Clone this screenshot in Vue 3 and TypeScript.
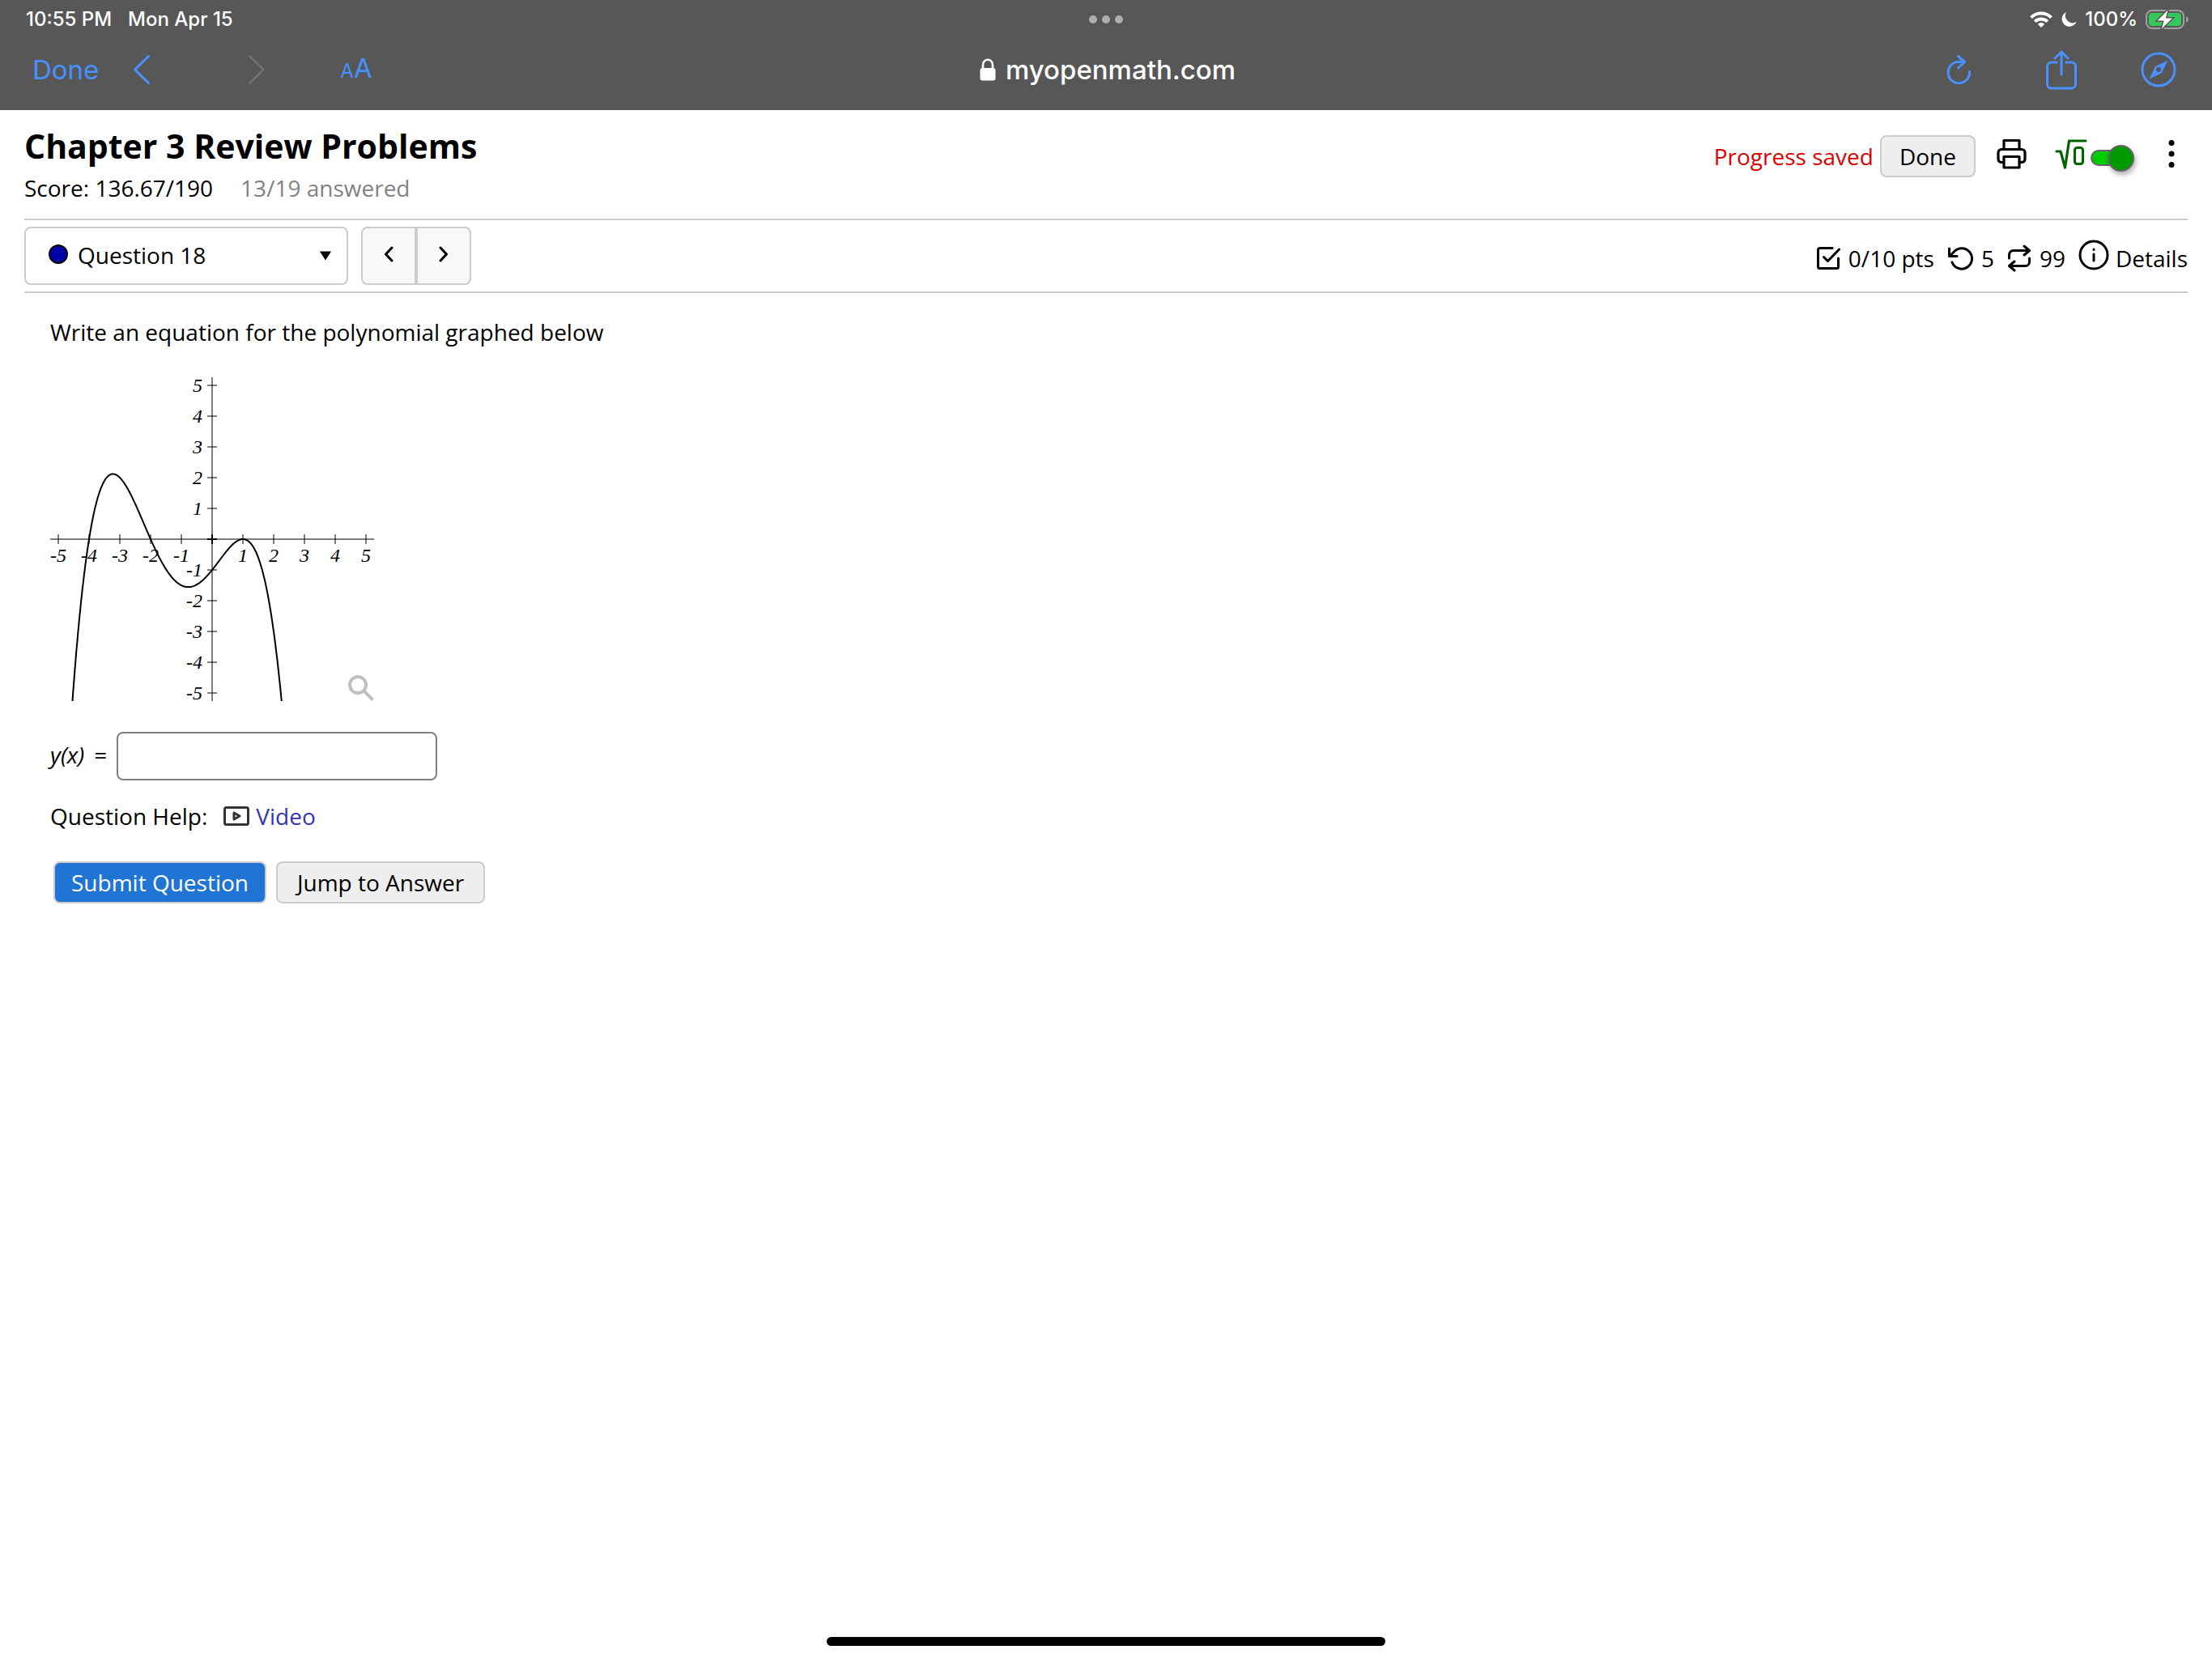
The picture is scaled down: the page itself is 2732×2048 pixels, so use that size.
<script setup lang="ts">
import { ref } from 'vue'

const UNIT = 38
const CENTER = 200
const ticks: number[] = [-5, -4, -3, -2, -1, 1, 2, 3, 4, 5]

const px = (x: number): number => CENTER + x * UNIT
const py = (y: number): number => CENTER - y * UNIT

// Quartic with roots at -4 and -2 and a double root at 1
const f = (x: number): number => (-1 / 8) * (x + 4) * (x + 2) * (x - 1) ** 2

// Points run a little past the window; the clip path trims both ends
const points: string[] = []
for (let x = -5.2; x <= 5.2; x += 0.02) {
  const y = f(x)
  if (y >= -5.8) points.push(`${px(x).toFixed(1)},${py(y).toFixed(1)}`)
}
const curve = points.join(' ')

const answer = ref('')
const question = ref('18')
const mathDisplay = ref(true)
</script>

<template>
  <div class="screen">
    <header class="chrome">
      <div class="status">
        <div class="status-left">
          <span>10:55 PM</span>
          <span>Mon Apr 15</span>
        </div>
        <svg class="dots" width="42" height="10" viewBox="0 0 42 10" aria-hidden="true">
          <circle cx="5" cy="5" r="5" />
          <circle cx="21" cy="5" r="5" />
          <circle cx="37" cy="5" r="5" />
        </svg>
        <div class="status-right">
          <svg width="28" height="20" viewBox="0 0 28 20" aria-hidden="true">
            <g fill="none" stroke="#fff" stroke-width="4">
              <path d="M1.500 7.600a18 18 0 0 1 25 0" />
              <path d="M6.200 12.600a11.200 11.200 0 0 1 15.600 0" />
            </g>
            <path fill="#fff" d="M14 20l-4.200-4.300a6 6 0 0 1 8.400 0z" />
          </svg>
          <svg class="moon" width="20" height="20" viewBox="0 0 20 20" aria-hidden="true">
            <path fill="#fff" d="M7 1A9.300 9.300 0 1 0 19.500 13 9 9 0 0 1 7 1z" />
          </svg>
          <span class="percent">100%</span>
          <svg width="54" height="26" viewBox="0 0 54 26" aria-hidden="true">
            <rect x="1" y="2" width="46" height="22" rx="7" fill="none" stroke="#a0a0a0" stroke-width="2" />
            <path fill="#a0a0a0" d="M50 9q3 1.500 3 4t-3 4z" />
            <rect x="4" y="5" width="40" height="16" rx="4" fill="#34c759" />
            <path fill="#fff" stroke="#575757" stroke-width="3" paint-order="stroke" d="M27.500 1.500L14.500 14.500h8.200L19.800 24.500 33 11.500h-8.200z" />
          </svg>
        </div>
      </div>
      <div class="toolbar">
        <div class="tools-left">
          <button type="button" class="tool">Done</button>
          <button type="button" class="tool back" aria-label="Back">
            <svg width="22" height="38" viewBox="0 0 22 38"><path d="M19.500 2.500L2.500 19l17 16.500" /></svg>
          </button>
          <button type="button" class="tool forward" aria-label="Forward" disabled>
            <svg width="22" height="38" viewBox="0 0 22 38"><path d="M2.500 2.500L19.500 19l-17 16.500" /></svg>
          </button>
          <button type="button" class="tool sizes" aria-label="Text size"><small>A</small>A</button>
        </div>
        <div class="address">
          <svg width="20" height="28" viewBox="0 0 20 28" aria-hidden="true">
            <rect x="0.500" y="12" width="19" height="15.500" rx="3" fill="#fff" />
            <path d="M4 13V8a6 6.200 0 0 1 12 0v5" fill="none" stroke="#fff" stroke-width="2.600" />
          </svg>
          <span>myopenmath.com</span>
        </div>
        <div class="tools-right">
          <button type="button" class="tool" aria-label="Reload">
            <svg width="44" height="40" viewBox="0 0 44 40">
              <path d="M22.500 10.500L15.300 10.200A13.300 13.300 0 1 0 28.600 22.500" />
              <path d="M14.500 3.500l8 7-8 7.500" />
            </svg>
          </button>
          <button type="button" class="tool" aria-label="Share">
            <svg width="40" height="50" viewBox="0 0 40 50">
              <path d="M14 16H7.500a5 5 0 0 0-5 5v22a5 5 0 0 0 5 5h25a5 5 0 0 0 5-5V21a5 5 0 0 0-5-5H26" />
              <path d="M20 31V3M12 11l8-8 8 8" />
            </svg>
          </button>
          <button type="button" class="tool" aria-label="Open in browser">
            <svg width="44" height="44" viewBox="0 0 44 44">
              <circle cx="22" cy="22" r="20" />
              <path fill="#4891ff" fill-rule="evenodd" stroke="none" d="M33.500 10.500L18 18 10.500 33.500 26 26zM22 19a3 3 0 1 1 0 6 3 3 0 0 1 0-6z" />
            </svg>
          </button>
        </div>
      </div>
    </header>

    <main class="page">
      <div class="heading">
        <div>
          <h1>Chapter 3 Review Problems</h1>
          <p class="score"><span>Score: 136.67/190</span><span class="answered">13/19 answered</span></p>
        </div>
        <div class="actions">
          <span class="saved">Progress saved</span>
          <button type="button" class="btn done">Done</button>
          <button type="button" class="icon-btn print" aria-label="Print">
            <svg width="38" height="38" viewBox="0 0 38 38" fill="none" stroke="#000" stroke-width="3.200" stroke-linejoin="round">
              <path d="M9 13.500V2.500h19v11" />
              <path d="M9 29.500H6a4 4 0 0 1-4-4v-8a4 4 0 0 1 4-4h25a4 4 0 0 1 4 4v8a4 4 0 0 1-4 4h-3" />
              <path d="M9 22.500h19v13.500H9z" />
            </svg>
          </button>
          <label class="switch">
            <svg width="40" height="38" viewBox="0 0 40 38" fill="none" stroke="#006400" stroke-width="3.200" stroke-linecap="round" stroke-linejoin="round" aria-hidden="true">
              <path d="M2 16h5l5.500 20L17.500 3H38" />
              <rect x="24.500" y="11.500" width="10" height="20" rx="3" />
            </svg>
            <input v-model="mathDisplay" type="checkbox" aria-label="Math display" />
            <span class="track"><span class="knob"></span></span>
          </label>
          <button type="button" class="icon-btn" aria-label="More options">
            <svg width="8" height="36" viewBox="0 0 8 36"><circle cx="4" cy="4.500" r="3.500" /><circle cx="4" cy="18" r="3.500" /><circle cx="4" cy="31.500" r="3.500" /></svg>
          </button>
        </div>
      </div>

      <div class="nav">
        <div class="picker">
          <select v-model="question" aria-label="Question">
            <option value="18">Question 18</option>
          </select>
          <span class="marker"></span>
          <svg class="caret" width="16" height="12" viewBox="0 0 16 12" aria-hidden="true"><path d="M1 0.500h14L8 11.500z" /></svg>
        </div>
        <div class="pager">
          <button type="button" aria-label="Previous question">
            <svg width="14" height="20" viewBox="0 0 14 20"><path d="M11 2L3.500 10l7.500 8" /></svg>
          </button>
          <button type="button" aria-label="Next question">
            <svg width="14" height="20" viewBox="0 0 14 20"><path d="M3 2l7.500 8L3 18" /></svg>
          </button>
        </div>
        <div class="meta">
          <span class="item">
            <svg width="30" height="30" viewBox="0 0 30 30"><path d="M20 2.500H4.500a2 2 0 0 0-2 2v21a2 2 0 0 0 2 2h21a2 2 0 0 0 2-2V15" /><path d="M9.500 13.500l5 5L28.500 4" /></svg>
            0/10 pts
          </span>
          <span class="item">
            <svg width="32" height="30" viewBox="0 0 32 30"><path d="M2.500 3v9.500h9.500" /><path d="M3.500 12l4.800-5A12.700 12.700 0 1 1 6 20" /></svg>
            5
          </span>
          <span class="item">
            <svg width="30" height="34" viewBox="0 0 30 34"><path d="M2.500 17v-4.500a5 5 0 0 1 5-5H27M21 2l6.500 5.500L21 13" /><path d="M27.500 17v4.500a5 5 0 0 1-5 5H3M9 21l-6.500 5.500L9 32" /></svg>
            99
          </span>
          <button type="button" class="details">
            <svg width="38" height="38" viewBox="0 0 38 38"><circle cx="19" cy="19" r="17" /><path d="M19 18v8M19 12v0.500" /></svg>
            Details
          </button>
        </div>
      </div>

      <section class="question">
        <p class="prompt">Write an equation for the polynomial graphed below</p>
        <div class="graph">
          <svg class="plot" width="400" height="400" viewBox="0 0 400 400" role="img" aria-label="Graph of a quartic polynomial">
            <clipPath id="plot-area"><rect width="400" height="400" /></clipPath>
            <g class="axes">
              <path d="M0 200h400" />
              <path d="M200 0v400" />
              <path class="origin" d="M194 200h12M200 194v12" />
              <template v-for="t in ticks" :key="t">
                <path :d="`M${px(t)} 194v12`" />
                <path :d="`M194 ${py(t)}h12`" />
              </template>
            </g>
            <g class="labels">
              <template v-for="t in ticks" :key="t">
                <text :x="px(t)" y="228" text-anchor="middle">{{ t }}</text>
                <text x="188" :y="py(t) + 8" text-anchor="end">{{ t }}</text>
              </template>
            </g>
            <polyline :points="curve" class="curve" clip-path="url(#plot-area)" />
          </svg>
          <button type="button" class="zoom" aria-label="Enlarge graph">
            <svg width="34" height="34" viewBox="0 0 34 34"><circle cx="14" cy="14" r="10" /><path d="M21 21l11.500 11.500" /></svg>
          </button>
        </div>
        <div class="answer">
          <label for="answer"><i>y(x)</i><span>=</span></label>
          <input id="answer" v-model="answer" type="text" autocomplete="off" />
        </div>
        <p class="help">
          <span>Question Help:</span>
          <a href="#video">
            <svg width="32" height="24" viewBox="0 0 32 24" aria-hidden="true"><rect x="1.500" y="1.500" width="29" height="21" rx="2" /><path d="M13 8l7 4-7 4z" /></svg>
            Video
          </a>
        </p>
        <div class="buttons">
          <button type="button" class="btn primary">Submit Question</button>
          <button type="button" class="btn">Jump to Answer</button>
        </div>
      </section>
    </main>

    <div class="home"></div>
  </div>
</template>

<style>
body {
  margin: 0;
  background: #fff;
}
</style>

<style scoped>
* {
  box-sizing: border-box;
}

.screen {
  display: flex;
  flex-direction: column;
  min-height: 100vh;
  color: #000;
  font-family: 'Open Sans', 'Noto Sans', sans-serif;
  font-size: 28px;
  line-height: 36px;
}

button,
select,
input {
  margin: 0;
  font: inherit;
  color: inherit;
}

svg {
  display: block;
  flex: none;
}

h1,
p {
  margin: 0;
}

.chrome {
  background: #575757;
  color: #fff;
  font-family: Inter, 'Liberation Sans', sans-serif;
}

.status,
.toolbar {
  display: grid;
  grid-template-columns: 1fr auto 1fr;
  align-items: center;
}

.status {
  height: 48px;
  padding: 0 28px 0 32px;
  font-size: 24px;
  font-weight: 500;
}

.status-left {
  display: flex;
  gap: 20px;
}

.dots {
  margin-right: 4px;
  fill: #aeaeae;
}

.status-right {
  display: flex;
  align-items: center;
  justify-content: flex-end;
}

.moon {
  margin-left: 10px;
}

.percent {
  margin: 0 10px;
}

.toolbar {
  height: 88px;
  padding: 0 44px 12px 40px;
  font-size: 33px;
  line-height: 40px;
}

.tools-left,
.tools-right {
  display: flex;
  align-items: center;
}

.tools-right {
  justify-content: flex-end;
  gap: 78px;
}

.tool {
  padding: 0;
  border: 0;
  background: none;
  color: #4891ff;
}

.tool svg {
  fill: none;
  stroke: #4891ff;
  stroke-width: 3;
  stroke-linecap: round;
  stroke-linejoin: round;
}

.back {
  margin-left: 42px;
}

.forward {
  margin-left: 120px;
}

.forward svg {
  stroke: #6f6f6f;
}

.sizes {
  margin-left: 92px;
}

.sizes small {
  font-size: 24px;
}

.address {
  display: flex;
  align-items: center;
  gap: 12px;
  margin-left: 8px;
  font-weight: 500;
}

.page {
  padding: 0 30px;
}

.heading {
  display: flex;
  justify-content: space-between;
  padding: 18px 0 20px;
}

h1 {
  font-size: 41px;
  line-height: 52px;
  font-weight: 700;
}

.score {
  display: flex;
  gap: 34px;
  margin-top: 8px;
}

.answered {
  color: #828282;
}

.actions {
  display: flex;
  align-items: center;
  height: 72px;
}

.saved {
  margin: 6px 8px 0 0;
  color: #d00;
}

.btn {
  height: 52px;
  padding: 0 24px;
  border: 2px solid #ccc;
  border-radius: 8px;
  background: #eee;
}

.done {
  margin-top: 6px;
  padding: 0 22px;
}

.primary {
  padding: 0 20px;
  background: #1f74d4;
  color: #fff;
}

.icon-btn {
  padding: 0;
  border: 0;
  background: none;
}

.print {
  margin-left: 26px;
}

.switch {
  display: flex;
  align-items: center;
  gap: 4px;
  margin: 0 42px 0 34px;
}

.switch input {
  position: absolute;
  opacity: 0;
}

.track {
  display: flex;
  align-items: center;
  justify-content: flex-end;
  width: 54px;
  height: 20px;
  margin-top: 10px;
  border: 2px solid #666;
  border-radius: 10px;
  background: #0c0;
}

.knob {
  flex: none;
  width: 33px;
  height: 33px;
  margin-right: -2px;
  border: 2px solid #666;
  border-radius: 50%;
  background: #090;
  box-shadow: 2px 4px 6px rgba(0, 0, 0, 0.3);
}

.actions .icon-btn:last-child {
  margin-right: 16px;
}

.nav {
  display: flex;
  align-items: center;
  padding: 8px 0;
  border-top: 2px solid #ccc;
  border-bottom: 2px solid #ccc;
}

.picker {
  position: relative;
}

.picker select {
  display: block;
  width: 400px;
  height: 72px;
  padding: 0 40px 2px 64px;
  border: 2px solid #ccc;
  border-radius: 8px;
  background: #fff;
  appearance: none;
}

.marker {
  position: absolute;
  left: 30px;
  top: 22px;
  width: 24px;
  height: 24px;
  border: 2px solid #000;
  border-radius: 50%;
  background: #00a;
}

.caret {
  position: absolute;
  right: 20px;
  top: 30px;
}

.pager {
  display: flex;
  margin-left: 16px;
}

.pager button {
  display: flex;
  align-items: center;
  justify-content: center;
  width: 68px;
  height: 72px;
  padding: 0 0 4px;
  border: 2px solid #ccc;
  border-radius: 8px 0 0 8px;
  background: #f8f8f8;
}

.pager button:last-child {
  border-radius: 0 8px 8px 0;
}

.pager svg,
.meta svg {
  fill: none;
  stroke: #000;
  stroke-width: 3;
  stroke-linecap: round;
  stroke-linejoin: round;
}

.meta {
  display: flex;
  align-items: center;
  gap: 16px;
  margin-left: auto;
  padding-top: 6px;
}

.item,
.details {
  display: flex;
  align-items: center;
  gap: 10px;
}

.details {
  gap: 8px;
  padding: 0;
  border: 0;
  background: none;
}

.details svg {
  margin-bottom: 8px;
}

.question {
  padding: 30px 32px 0;
}

.graph {
  position: relative;
  width: 400px;
  margin: 38px 0;
}

.plot {
  overflow: visible;
}

.axes path {
  stroke: rgba(0, 0, 0, 0.5);
  stroke-width: 2;
}

.axes .origin {
  stroke: #000;
}

.labels text {
  font: italic 24px 'Liberation Serif', serif;
}

.curve {
  fill: none;
  stroke: #000;
  stroke-width: 2;
}

.zoom {
  position: absolute;
  right: 0;
  bottom: 0;
  padding: 0;
  border: 0;
  background: none;
}

.zoom svg {
  fill: none;
  stroke: #c0c0c0;
  stroke-width: 4;
}

.answer {
  display: flex;
  align-items: center;
  gap: 12px;
}

.answer label {
  display: flex;
  gap: 12px;
  padding-bottom: 4px;
}

.answer input {
  width: 396px;
  height: 60px;
  padding: 0 12px;
  border: 2px solid #808080;
  border-radius: 8px;
  background: #fff;
}

.help {
  display: flex;
  gap: 20px;
  margin: 26px 0 38px;
}

.help a {
  display: flex;
  align-items: center;
  gap: 8px;
  color: #33b;
  text-decoration: none;
}

.help svg {
  fill: none;
  stroke: #333;
  stroke-width: 3;
  stroke-linejoin: round;
}

.buttons {
  display: flex;
  gap: 12px;
  padding-left: 4px;
}

.home {
  width: 690px;
  height: 11px;
  margin: auto auto 15px;
  border-radius: 6px;
  background: #000;
}
</style>
